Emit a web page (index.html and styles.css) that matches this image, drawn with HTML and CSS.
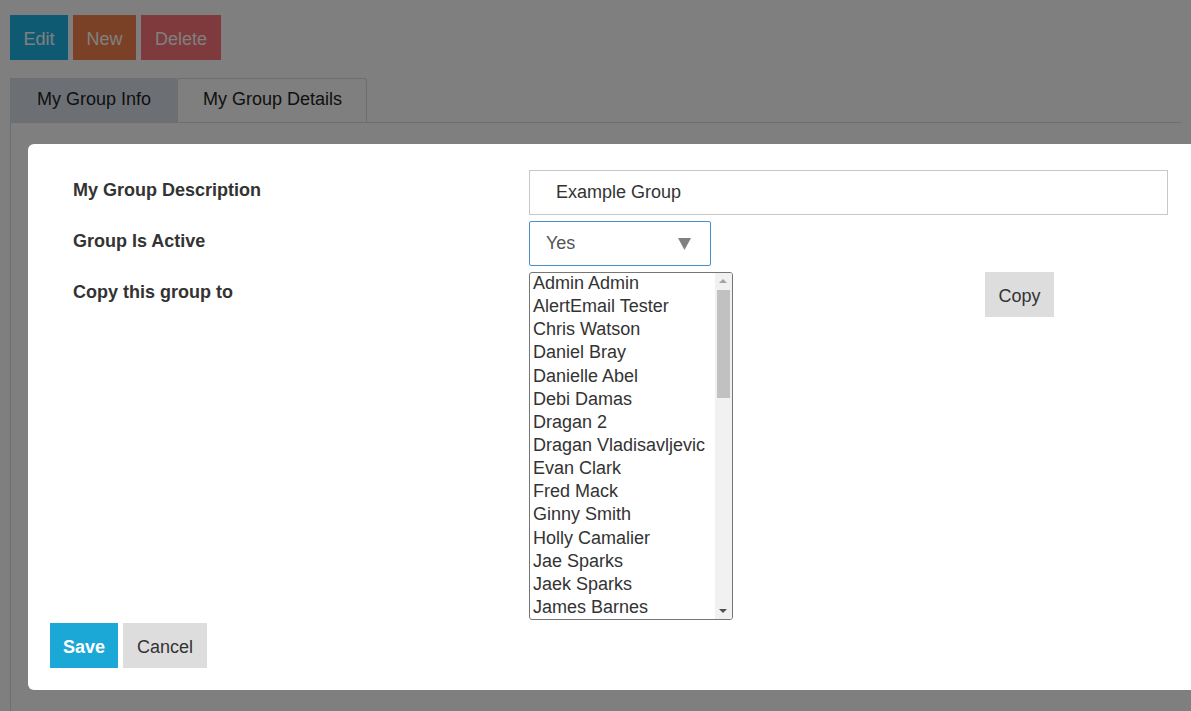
FILE: index.html
```html
<!DOCTYPE html>
<html>
<head>
<meta charset="utf-8">
<link rel="stylesheet" href="styles.css">
</head>
<body>
<div class="page">
  <div class="toolbar">
    <button class="btn btn-edit">Edit</button>
    <button class="btn btn-new">New</button>
    <button class="btn btn-delete">Delete</button>
  </div>
  <div class="tabs">
    <div class="tab tab-active">My Group Info</div>
    <div class="tab">My Group Details</div>
  </div>
  <div class="tab-content"></div>
</div>
<div class="overlay"></div>
<div class="modal">
  <div class="form">
    <div class="row">
      <div class="label">My Group Description</div>
      <div class="field">
        <div class="text-input">Example Group</div>
      </div>
    </div>
    <div class="row">
      <div class="label">Group Is Active</div>
      <div class="field">
        <div class="select">
          <span>Yes</span>
          <svg class="caret" width="13" height="12" viewBox="0 0 13 12"><path d="M0 0 H13 L6.5 12 Z" fill="#808080"/></svg>
        </div>
      </div>
    </div>
    <div class="row">
      <div class="label">Copy this group to</div>
      <div class="field field-copy">
        <div class="listbox">
          <ul class="options">
            <li>Admin Admin</li>
            <li>AlertEmail Tester</li>
            <li>Chris Watson</li>
            <li>Daniel Bray</li>
            <li>Danielle Abel</li>
            <li>Debi Damas</li>
            <li>Dragan 2</li>
            <li>Dragan Vladisavljevic</li>
            <li>Evan Clark</li>
            <li>Fred Mack</li>
            <li>Ginny Smith</li>
            <li>Holly Camalier</li>
            <li>Jae Sparks</li>
            <li>Jaek Sparks</li>
            <li>James Barnes</li>
          </ul>
          <div class="scrollbar">
            <div class="sb-arrow sb-up"></div>
            <div class="sb-track"><div class="sb-thumb"></div></div>
            <div class="sb-arrow sb-down"></div>
          </div>
        </div>
        <button class="btn btn-copy">Copy</button>
      </div>
    </div>
  </div>
  <div class="footer">
    <button class="btn btn-save">Save</button>
    <button class="btn btn-cancel">Cancel</button>
  </div>
</div>
</body>
</html>
```

FILE: styles.css
```css
* { box-sizing: border-box; }
html, body { margin: 0; padding: 0; }
body {
  width: 1191px;
  height: 711px;
  overflow: hidden;
  background: #ffffff;
  font-family: "Liberation Sans", Arial, sans-serif;
  color: #222;
  position: relative;
}
.page {
  padding: 15px 10px 0 10px;
}
.toolbar {
  display: flex;
  gap: 5px;
}
.btn {
  font-family: "Liberation Sans", Arial, sans-serif;
  font-size: 18px;
  border: none;
  height: 45px;
  padding: 3px 0 0 0;
  margin: 0;
  cursor: pointer;
}
.btn-edit { width: 58px; background: #1fb4e6; color: #fff; }
.btn-new { width: 63px; background: #f4824c; color: #fff; }
.btn-delete { width: 80px; background: #fc7478; color: #fff; }

.tabs {
  display: flex;
  margin-top: 18px;
  height: 44px;
}
.tab {
  font-size: 18px;
  color: #222;
  line-height: 41px;
  padding: 0 24px 0 25px;
  border: 1px solid #dcdcdc;
  border-bottom: none;
  border-radius: 3px 3px 0 0;
  background: #fff;
}
.tab-active {
  width: 167px;
  padding: 0 0 0 27px;
  background: #d8e0ea;
  border: none;
  border-radius: 0;
  line-height: 43px;
}
.tab-content {
  border-top: 1px solid #dcdcdc;
  border-left: 1px solid #dcdcdc;
  height: 600px;
}
.overlay {
  position: absolute;
  inset: 0;
  background: rgba(0, 0, 0, 0.5);
}
.modal {
  position: absolute;
  left: 28px;
  top: 144px;
  width: 1200px;
  height: 546px;
  background: #fff;
  border-radius: 6px;
  display: flex;
  flex-direction: column;
  padding: 26px 0 22px 22px;
}
.form {
  display: flex;
  flex-direction: column;
  gap: 6px;
  padding-left: 23px;
}
.row {
  display: flex;
}
.label {
  width: 456px;
  flex: none;
  font-size: 18px;
  font-weight: bold;
  color: #333;
  padding-top: 10px;
}
.field {
  flex: none;
}
.text-input {
  width: 639px;
  height: 45px;
  border: 1px solid #c8c8c8;
  font-size: 18px;
  color: #333;
  line-height: 43px;
  padding-left: 26px;
}
.select {
  width: 182px;
  height: 45px;
  border: 1px solid #4a90c8;
  border-radius: 2px;
  display: flex;
  align-items: center;
  justify-content: space-between;
  padding: 0 19px 0 16px;
  font-size: 18px;
  color: #555;
}
.caret { display: block; }
.field-copy {
  display: flex;
  align-items: flex-start;
}
.listbox {
  width: 204px;
  height: 348px;
  border: 1px solid #767676;
  border-radius: 3px;
  display: flex;
  overflow: hidden;
}
.options {
  list-style: none;
  margin: -1px 0 0 0;
  padding: 0 0 0 3px;
  flex: 1;
  font-size: 18px;
  color: #333;
  line-height: 23px;
  white-space: nowrap;
  overflow: hidden;
}
.options li { height: 23.15px; }
.scrollbar {
  width: 17px;
  flex: none;
  background: #f1f1f1;
  display: flex;
  flex-direction: column;
}
.sb-arrow {
  height: 17px;
  position: relative;
  flex: none;
}
.sb-up::after, .sb-down::after {
  content: "";
  position: absolute;
  left: 4px;
  width: 0;
  height: 0;
  border-left: 4px solid transparent;
  border-right: 4px solid transparent;
}
.sb-up::after { top: 6px; border-bottom: 4px solid #a3a3a3; }
.sb-down::after { top: 7px; border-top: 4px solid #505050; }
.sb-track {
  flex: 1;
  padding: 0 2px;
}
.sb-thumb {
  height: 108px;
  background: #c1c1c1;
}
.btn-copy {
  margin-left: 252px;
  width: 69px;
  background: #dddddd;
  color: #333;
}
.footer {
  margin-top: auto;
  display: flex;
  gap: 5px;
}
.btn-save {
  width: 68px;
  background: #1ba8d6;
  color: #fff;
  font-weight: bold;
}
.btn-cancel {
  width: 84px;
  background: #dddddd;
  color: #333;
}
```
